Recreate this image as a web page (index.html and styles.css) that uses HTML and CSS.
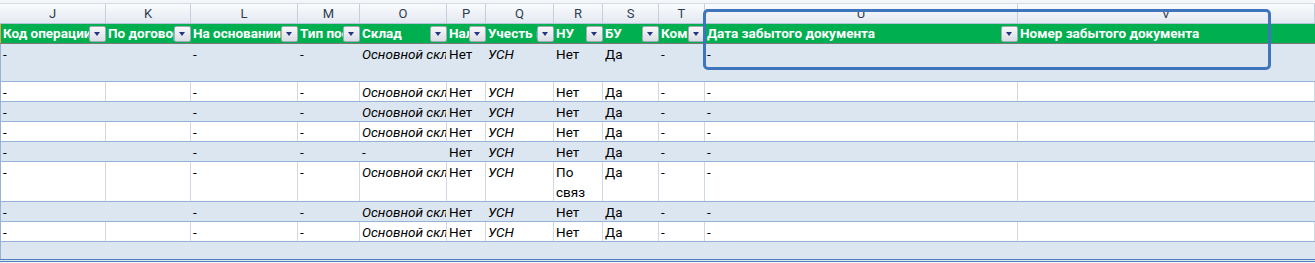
FILE: index.html
```html
<!DOCTYPE html>
<html lang="ru">
<head>
<meta charset="utf-8">
<title>Лист</title>
<link rel="stylesheet" href="styles.css">
</head>
<body>
<div class="sheet">
  <div class="row colhead">
    <div class="ch">J</div><div class="ch">K</div><div class="ch">L</div><div class="ch">M</div><div class="ch">O</div><div class="ch">P</div><div class="ch">Q</div><div class="ch">R</div><div class="ch">S</div><div class="ch">T</div><div class="ch">U</div><div class="ch">V</div>
  </div>
  <div class="row hdr">
    <div class="hc first"><span class="ht">Код операции</span><span class="fb"></span></div>
    <div class="hc"><span class="ht">По договору</span><span class="fb"></span></div>
    <div class="hc"><span class="ht">На основании</span><span class="fb"></span></div>
    <div class="hc"><span class="ht">Тип поступления</span><span class="fb"></span></div>
    <div class="hc"><span class="ht">Склад</span><span class="fb"></span></div>
    <div class="hc"><span class="ht">Налог</span><span class="fb"></span></div>
    <div class="hc"><span class="ht">Учесть в расходах</span><span class="fb"></span></div>
    <div class="hc"><span class="ht">НУ</span><span class="fb"></span></div>
    <div class="hc"><span class="ht">БУ</span><span class="fb"></span></div>
    <div class="hc"><span class="ht">Комментарий</span><span class="fb"></span></div>
    <div class="hc"><span class="ht">Дата забытого документа</span><span class="fb"></span></div>
    <div class="hc"><span class="ht">Номер забытого документа</span></div>
  </div>

  <div class="row band h38">
    <div class="c first">-</div><div class="c"></div><div class="c">-</div><div class="c">-</div><div class="c i">Основной склад</div><div class="c">Нет</div><div class="c i">УСН</div><div class="c">Нет</div><div class="c">Да</div><div class="c">-</div><div class="c">-</div><div class="c"></div>
  </div>
  <div class="row plain">
    <div class="c first">-</div><div class="c"></div><div class="c">-</div><div class="c">-</div><div class="c i">Основной склад</div><div class="c">Нет</div><div class="c i">УСН</div><div class="c">Нет</div><div class="c">Да</div><div class="c">-</div><div class="c">-</div><div class="c"></div>
  </div>
  <div class="row band">
    <div class="c first">-</div><div class="c"></div><div class="c">-</div><div class="c">-</div><div class="c i">Основной склад</div><div class="c">Нет</div><div class="c i">УСН</div><div class="c">Нет</div><div class="c">Да</div><div class="c">-</div><div class="c">-</div><div class="c"></div>
  </div>
  <div class="row plain">
    <div class="c first">-</div><div class="c"></div><div class="c">-</div><div class="c">-</div><div class="c i">Основной склад</div><div class="c">Нет</div><div class="c i">УСН</div><div class="c">Нет</div><div class="c">Да</div><div class="c">-</div><div class="c">-</div><div class="c"></div>
  </div>
  <div class="row band">
    <div class="c first">-</div><div class="c"></div><div class="c">-</div><div class="c">-</div><div class="c">-</div><div class="c">Нет</div><div class="c i">УСН</div><div class="c">Нет</div><div class="c">Да</div><div class="c">-</div><div class="c">-</div><div class="c"></div>
  </div>
  <div class="row plain h40">
    <div class="c first">-</div><div class="c"></div><div class="c">-</div><div class="c">-</div><div class="c i">Основной склад</div><div class="c">Нет</div><div class="c i">УСН</div><div class="c wrap">По связ</div><div class="c">Да</div><div class="c">-</div><div class="c">-</div><div class="c"></div>
  </div>
  <div class="row band">
    <div class="c first">-</div><div class="c"></div><div class="c">-</div><div class="c">-</div><div class="c i">Основной склад</div><div class="c">Нет</div><div class="c i">УСН</div><div class="c">Нет</div><div class="c">Да</div><div class="c">-</div><div class="c">-</div><div class="c"></div>
  </div>
  <div class="row plain">
    <div class="c first">-</div><div class="c"></div><div class="c">-</div><div class="c">-</div><div class="c i">Основной склад</div><div class="c">Нет</div><div class="c i">УСН</div><div class="c">Нет</div><div class="c">Да</div><div class="c">-</div><div class="c">-</div><div class="c"></div>
  </div>
  <div class="row band total">
    <div class="c first"></div><div class="c"></div><div class="c"></div><div class="c"></div><div class="c"></div><div class="c"></div><div class="c"></div><div class="c"></div><div class="c"></div><div class="c"></div><div class="c"></div><div class="c"></div>
  </div>

  <div class="selection"></div>
</div>
</body>
</html>
```

FILE: styles.css
```css
html, body {
  margin: 0;
  padding: 0;
  background: #ffffff;
}

body {
  font-family: Roboto, "Liberation Sans", sans-serif;
  font-size: 13.5px;
  color: #000;
}

.sheet {
  position: relative;
  width: 1315px;
  height: 263px;
  overflow: hidden;
  padding-top: 3px;
  box-sizing: border-box;
  background: #f4f6f9;
}

.row {
  display: grid;
  grid-template-columns: 106px 85px 107px 62px 87px 39px 68px 49px 56px 46px 313px 1fr;
  box-sizing: border-box;
}

/* column letters */
.colhead {
  height: 21px;
  border-top: 1px solid #d3dbe6;
  border-bottom: 1px solid #b5c5d8;
  background: linear-gradient(#fafbfd, #e3e9f1);
}

.ch {
  box-sizing: border-box;
  border-right: 1px solid #c3cfdd;
  text-align: center;
  font-size: 13px;
  line-height: 19px;
  color: #2f3d50;
}

/* green header */
.hdr {
  height: 20px;
  background: #00b050;
  border-bottom: 1px solid #7a7a7a;
}

.hc {
  display: flex;
  align-items: flex-start;
  box-sizing: border-box;
  min-width: 0;
  padding-left: 2px;
  color: #ffffff;
  font-weight: 700;
  line-height: 18px;
}

.hc.first {
  border-left: 1px solid #f0a040;
}

.ht {
  flex: 1 1 auto;
  min-width: 0;
  overflow: hidden;
  white-space: nowrap;
}

.fb {
  position: relative;
  flex: 0 0 17px;
  margin-top: 2px;
  height: 16px;
  box-sizing: border-box;
  border: 1px solid #a3abb7;
  border-radius: 2px;
  background: linear-gradient(#f7f8fa, #d9dde4);
}

.fb::after {
  content: "";
  position: absolute;
  left: 4px;
  top: 5px;
  width: 0;
  height: 0;
  border-left: 3.5px solid transparent;
  border-right: 3.5px solid transparent;
  border-top: 4px solid #253480;
}

/* data rows */
.band,
.plain {
  height: 20px;
  border-bottom: 1px solid #95b3d7;
}

.band {
  background: #dce6f1;
}

.plain {
  background: #ffffff;
}

.h38 {
  height: 38px;
}

.h40 {
  height: 40px;
}

.total {
  height: 20px;
  border-bottom: 3px double #4f81bd;
}

.c {
  box-sizing: border-box;
  overflow: hidden;
  white-space: nowrap;
  padding-left: 2px;
  line-height: 20px;
  border-right: 1px solid transparent;
}

.plain .c {
  border-right-color: #d0d7e5;
}

.c.first {
  border-left: 1px solid #95b3d7;
}

.c.i {
  font-style: italic;
}

.c.wrap {
  white-space: normal;
}

/* selection outline */
.selection {
  position: absolute;
  left: 703px;
  top: 9px;
  width: 568px;
  height: 61px;
  box-sizing: border-box;
  border: 3px solid #3e75bd;
  border-radius: 5px;
}
```
